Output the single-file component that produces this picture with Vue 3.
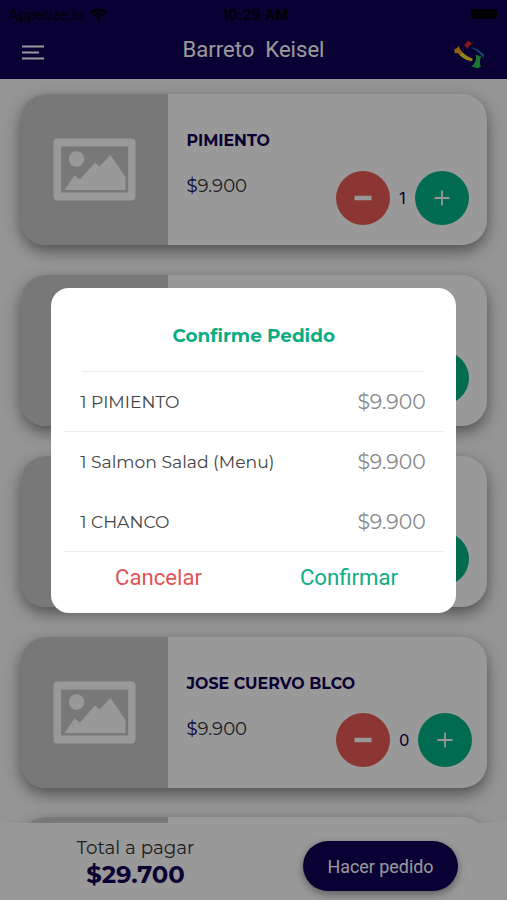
<script setup>
import { ref, computed } from 'vue'

const items = ref([
    { name: "PIMIENTO", label: "PIMIENTO", price: 9900, count: 1 },
    { name: "SALMON SALAD", label: "Salmon Salad (Menu)", price: 9900, count: 1 },
    { name: "CHANCO", label: "CHANCO", price: 9900, count: 1 },
    { name: "JOSE CUERVO BLCO", label: "JOSE CUERVO BLCO", price: 9900, count: 0 },
])
const showModal = ref(true)

const ordered = computed(() => items.value.filter((item) => item.count > 0))
const total = computed(() =>
    items.value.reduce((sum, item) => sum + item.price * item.count, 0)
)

const format = (n) => String(n).replace(/\B(?=(\d{3})+$)/g, ".")

const remove = (item) => {
    if (item.count > 0) item.count--
}
</script>

<template>
    <div class="screen">
        <header class="header">
            <div class="status">
                <div class="carrier">
                    <span>Appetize.io</span>
                    <svg width="17" height="13" viewBox="0 0 17 13">
                        <path d="M1 4.8a11 11 0 0 1 15 0M3.6 7.6a7 7 0 0 1 9.8 0" fill="none" stroke="#000" stroke-width="2.4" />
                        <path d="M5.8 9.6a4 4 0 0 1 5.4 0L8.5 12.4z" />
                    </svg>
                </div>
                <span class="clock">10:29 AM</span>
                <div class="battery-box"><div class="battery"></div></div>
            </div>
            <div class="nav">
                <svg class="menu" width="22" height="16" viewBox="0 0 22 16">
                    <path d="M0 1.5h22M0 7.5h17M0 13.5h22" stroke="#fff" stroke-width="2.2" />
                </svg>
                <span class="title">Barreto&nbsp; Keisel</span>
                <svg class="logo" width="32" height="30" viewBox="0 0 32 30">
                    <path d="M10 5.5 14.5 0.5C15 2 16.5 3 19.2 3L14.2 6.8 13.6 9.2C12.6 7.3 11.4 6.2 10 5.5z" fill="#e02a20" />
                    <path d="M4.6 5.6C5.8 10.5 10 15 18.6 18.8L18 21C11.5 20.6 6 16.2 4 13L0.8 13.2 0.3 9C2.4 9 4 8 4.6 5.6z" fill="#f0a020" />
                    <path d="M8 12.6C10.4 15 14 17.2 18.6 18.8L18 21C12.6 20.6 8.4 17.8 5.6 15z" fill="#f2dc30" />
                    <path d="M16.8 7C21.8 8.2 26.6 11.4 30 14.4L29.6 19C28.8 15 23 11 16.8 7z" fill="#1c86c8" />
                    <path d="M21.6 14.5 27.2 16.6C25.6 20 25.6 23.4 26.8 26.6L24 28.2 17 26.6C21.4 23.8 23 19.4 21.6 14.5z" fill="#2cc552" />
                </svg>
            </div>
        </header>

        <main class="list">
            <div class="card" v-for="(item, i) in items" :key="i">
                <div class="thumb">
                    <svg width="83" height="63" viewBox="0 0 83 63">
                        <path fill-rule="evenodd" d="M4.5 0.5h74a4 4 0 0 1 4 4v54a4 4 0 0 1-4 4h-74a4 4 0 0 1-4-4v-54a4 4 0 0 1 4-4zM8 8.5v46h67v-46z" />
                        <circle cx="23.5" cy="21" r="7.7" />
                        <path d="M11.5 52 21.5 37.5 27 41.5 42 24.5 46.5 28.5 57.5 17 72.5 39V52z" />
                    </svg>
                </div>
                <div class="info">
                    <div class="name">{{ item.name }}</div>
                    <div class="price"><span class="sign">$</span>{{ format(item.price) }}</div>
                    <div class="stepper">
                        <button class="round minus" @click="remove(item)">
                            <svg width="18" height="18" viewBox="0 0 18 18"><path d="M0.5 9h17" stroke-width="4.5" /></svg>
                        </button>
                        <span class="count">{{ item.count }}</span>
                        <button class="round plus" @click="item.count++">
                            <svg width="18" height="18" viewBox="0 0 18 18"><path d="M1.5 9h15M9 1.5v15" stroke-width="1.8" /></svg>
                        </button>
                    </div>
                </div>
            </div>
            <!-- next card, still below the fold -->
            <div class="card">
                <div class="thumb"></div>
            </div>
        </main>

        <footer class="footer">
            <div class="total">
                <div class="total-label">Total a pagar</div>
                <div class="total-value">${{ format(total) }}</div>
            </div>
            <button class="order" @click="showModal = true">Hacer pedido</button>
        </footer>

        <div class="overlay" v-if="showModal">
            <div class="modal">
                <div class="modal-title">Confirme Pedido</div>
                <div class="row" v-for="(item, i) in ordered" :key="i">
                    <span class="row-name">{{ item.count }} {{ item.label }}</span>
                    <span class="row-price">${{ format(item.price) }}</span>
                </div>
                <div class="actions">
                    <button class="cancel" @click="showModal = false">Cancelar</button>
                    <button class="confirm" @click="showModal = false">Confirmar</button>
                </div>
            </div>
        </div>
    </div>
</template>

<style>
body {
    margin: 0;
}
</style>

<style scoped>
.screen {
    width: 507px;
    height: 900px;
    overflow: hidden;
    display: flex;
    flex-direction: column;
    background: #fff;
    font-family: Montserrat, Inter, sans-serif;
}

button {
    border: 0;
    padding: 0;
    background: none;
    font-family: Roboto, sans-serif;
}

.header {
    flex: none;
    height: 79px;
    background: #100055;
}

.status {
    height: 28px;
    padding: 0 10px 0 9px;
    display: grid;
    grid-template-columns: 1fr auto 1fr;
    align-items: center;
    font-family: Inter, sans-serif;
    font-size: 14px;
    color: #000;
}

.carrier {
    display: flex;
    align-items: center;
    gap: 7px;
}

.clock {
    padding-left: 5px;
    font-weight: 600;
    letter-spacing: 0.3px;
}

.battery-box {
    display: flex;
    justify-content: flex-end;
}

.battery {
    width: 26px;
    height: 10px;
    border-radius: 3px;
    background: #000;
}

.nav {
    height: 51px;
    padding: 0 22px;
    display: grid;
    grid-template-columns: 1fr auto 1fr;
}

.menu {
    margin-top: 17px;
}

.title {
    margin-top: 8px;
    font: 22.1px/26px Roboto, sans-serif;
    color: #fff;
}

.logo {
    justify-self: end;
    margin-top: 12px;
    margin-right: -1px;
}

.list {
    flex: none;
    height: 743.5px;
    padding: 15.2px 20px 0 20.5px;
    box-sizing: border-box;
    overflow: hidden;
    background: #f8f8f8;
}

.card {
    height: 151px;
    margin-bottom: 29.8px;
    display: flex;
    border-radius: 25px;
    background: #fff;
    box-shadow: 0 6px 15px rgba(0, 0, 0, 0.46);
}

.thumb {
    width: 147.5px;
    display: flex;
    align-items: center;
    justify-content: center;
    border-radius: 25px 0 0 25px;
    background: #c8c8c8;
    fill: #fff;
}

.info {
    flex: 1;
    padding: 37px 0 0 18.5px;
}

.name {
    height: 20px;
    font-size: 15.85px;
    line-height: 20px;
    font-weight: 700;
    color: #100055;
}

.price {
    margin-top: 24px;
    font-size: 18.1px;
    line-height: 22px;
    color: #333;
}

.sign {
    color: #100055;
}

.stepper {
    margin: -26.5px 0 0 149.5px;
    display: flex;
    align-items: center;
    gap: 9px;
}

.round {
    width: 54px;
    height: 54px;
    border-radius: 50%;
    display: flex;
    align-items: center;
    justify-content: center;
    stroke: #fff;
}

.minus {
    background: #e85a55;
}

.plus {
    background: #00b386;
}

.count {
    font-family: Inter, sans-serif;
    font-size: 16.5px;
    color: #100055;
}

.footer {
    flex: 1;
    display: flex;
    align-items: flex-start;
    background: #fff;
}

.total {
    width: 271px;
    padding-top: 14px;
    text-align: center;
}

.total-label {
    font-size: 18.3px;
    line-height: 22px;
    color: #333;
}

.total-value {
    font-size: 24.3px;
    line-height: 30px;
    font-weight: 700;
    color: #100055;
}

.order {
    margin-left: 32px;
    margin-top: 18.5px;
    width: 155px;
    height: 50px;
    border-radius: 25px;
    background: #100055;
    box-shadow: 0 3px 8px rgba(0, 0, 0, 0.4);
    font-size: 17.9px;
    color: #fff;
}

.overlay {
    position: absolute;
    top: 0;
    left: 0;
    width: 507px;
    height: 900px;
    padding: 288px 0 0 0.5px;
    box-sizing: border-box;
    background: rgba(0, 0, 0, 0.4);
}

.modal {
    width: 405px;
    height: 325px;
    margin: 0 auto;
    border-radius: 18px;
    background: #fff;
}

.modal-title {
    height: 83px;
    margin: 0 31px;
    border-bottom: 1.5px solid #ececec;
    line-height: 96px;
    text-align: center;
    font-size: 18.4px;
    font-weight: 700;
    color: #0bac82;
}

.row {
    height: 60px;
    margin: 0 12.5px;
    padding: 0 18px 0 16.5px;
    box-sizing: border-box;
    display: flex;
    align-items: center;
    justify-content: space-between;
    border-bottom: 1.5px solid transparent;
    color: #444;
}

.row:nth-child(2),
.row:nth-last-child(2) {
    border-bottom-color: #ececec;
}

.row-name {
    font-size: 17.2px;
}

.row-price {
    font-size: 20.4px;
    color: #888;
}

.actions {
    height: 50px;
    display: flex;
    padding: 0 12px;
}

.actions button {
    flex: 1;
    font-size: 22.2px;
}

.cancel {
    color: #e05555;
}

.confirm {
    color: #10ad82;
}
</style>
